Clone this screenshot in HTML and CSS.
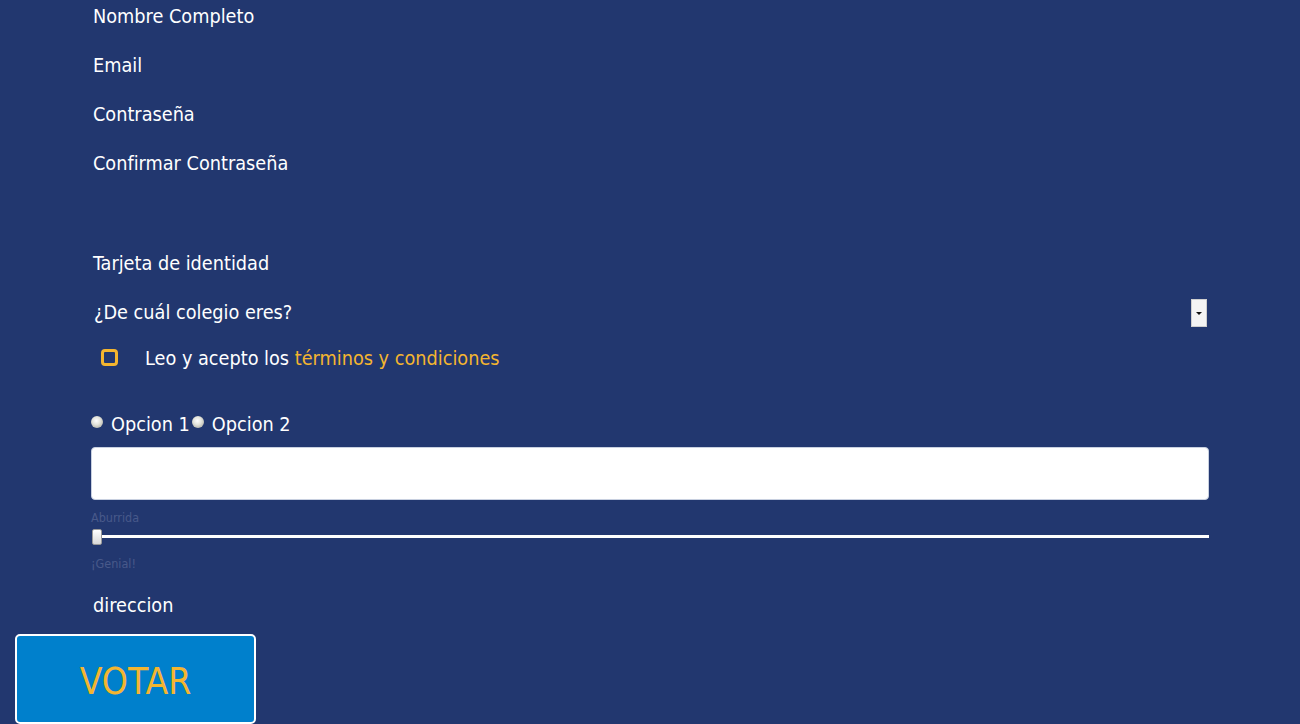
FILE: index.html
```html
<!DOCTYPE html>
<html lang="es">
<head>
<meta charset="utf-8">
<title>Registro</title>
<link rel="stylesheet" href="styles.css">
</head>
<body>
<form class="form">
  <div class="fields">
    <div class="label">Nombre Completo</div>
    <div class="label">Email</div>
    <div class="label">Contraseña</div>
    <div class="label">Confirmar Contraseña</div>
    <div class="label spaced">Tarjeta de identidad</div>
    <div class="select-row">
      <span class="label-inline">¿De cuál colegio eres?</span>
      <span class="select"><span class="arrow"></span></span>
    </div>
    <div class="check-row">
      <span class="checkbox"></span>
      <span class="check-text">Leo y acepto los <a class="link" href="#">términos y condiciones</a></span>
    </div>
    <div class="radio-row">
      <span class="radio"></span><span class="radio-text">Opcion 1</span><span class="radio"></span><span class="radio-text">Opcion 2</span>
    </div>
    <div class="textbox"></div>
    <div class="small">Aburrida</div>
    <div class="slider"><span class="track"></span><span class="thumb"></span></div>
    <div class="small">¡Genial!</div>
    <div class="label last">direccion</div>
  </div>
  <button class="vote" type="button">VOTAR</button>
</form>
</body>
</html>
```
FILE: styles.css
```css
html, body {
  margin: 0;
  padding: 0;
  background: #22376f;
  height: 100%;
  overflow: hidden;
}
body {
  font-family: "DejaVu Sans Condensed", "DejaVu Sans", sans-serif;
  font-stretch: semi-condensed;
  color: #ffffff;
}
.form {
  display: flex;
  flex-direction: column;
}
.fields {
  margin-left: 91px;
  width: 1118px;
  padding-top: 5px;
  display: flex;
  flex-direction: column;
}
.label {
  font-size: 19.7px;
  line-height: 24px;
  height: 24px;
  margin-bottom: 25px;
  padding-left: 2px;
}
.label.spaced {
  margin-top: 51px;
}
.select-row {
  display: flex;
  align-items: center;
  justify-content: space-between;
  height: 28px;
  margin-top: -2px;
}
.label-inline {
  font-size: 19.7px;
  line-height: 24px;
  padding-left: 3px;
}
.select {
  width: 14px;
  height: 26px;
  background: #f4f4f4;
  border: 1px solid #cfcfcf;
  margin-right: 2px;
  display: flex;
  align-items: center;
  justify-content: center;
}
.arrow {
  width: 0;
  height: 0;
  border-left: 3px solid transparent;
  border-right: 3px solid transparent;
  border-top: 3px solid #111;
}
.check-row {
  display: flex;
  align-items: center;
  height: 24px;
  margin-top: 20px;
}
.checkbox {
  width: 11px;
  height: 11px;
  border: 3px solid #f4b52f;
  border-radius: 4px;
  margin-left: 10px;
  margin-top: -3px;
}
.check-text {
  font-size: 19.7px;
  line-height: 24px;
  margin-left: 27px;
}
.link {
  color: #f4b52f;
  text-decoration: none;
}
.radio-row {
  display: flex;
  align-items: center;
  height: 24px;
  margin-top: 42px;
}
.radio {
  width: 12px;
  height: 12px;
  border-radius: 50%;
  background: radial-gradient(circle at 45% 40%, #ffffff 0%, #e4e4dc 40%, #9c9c92 100%);
  margin-top: -7px;
}
.radio-text {
  font-size: 19.7px;
  line-height: 24px;
  margin-left: 8px;
  margin-right: 2px;
}
.textbox {
  margin-top: 10px;
  height: 51px;
  background: #ffffff;
  border: 1px solid #c8d0e0;
  border-radius: 4px;
}
.small {
  font-size: 12.5px;
  line-height: 14px;
  height: 14px;
  color: #48598a;
  margin-top: 11px;
}
.slider {
  position: relative;
  height: 16px;
  margin-top: 4px;
}
.track {
  display: block;
  position: absolute;
  left: 1px;
  right: 0;
  top: 6px;
  height: 3px;
  background: #ffffff;
}
.thumb {
  position: absolute;
  left: 1px;
  top: 0;
  width: 8px;
  height: 14px;
  background: linear-gradient(#ffffff, #d8d8d8);
  border: 1px solid #9a9a9a;
  border-radius: 2px;
}
.slider + .small {
  margin-top: 12px;
}
.label.last {
  margin-top: 23px;
  margin-bottom: 0;
}
.vote {
  margin-top: 16px;
  margin-left: 15px;
  width: 241px;
  height: 90px;
  background: #0080cc;
  border: 2px solid #ffffff;
  border-radius: 5px;
  color: #f4b52f;
  font-family: "DejaVu Sans Condensed", "DejaVu Sans", sans-serif;
  font-stretch: semi-condensed;
  font-size: 37px;
  padding: 4px 0 0 0;
}
```
